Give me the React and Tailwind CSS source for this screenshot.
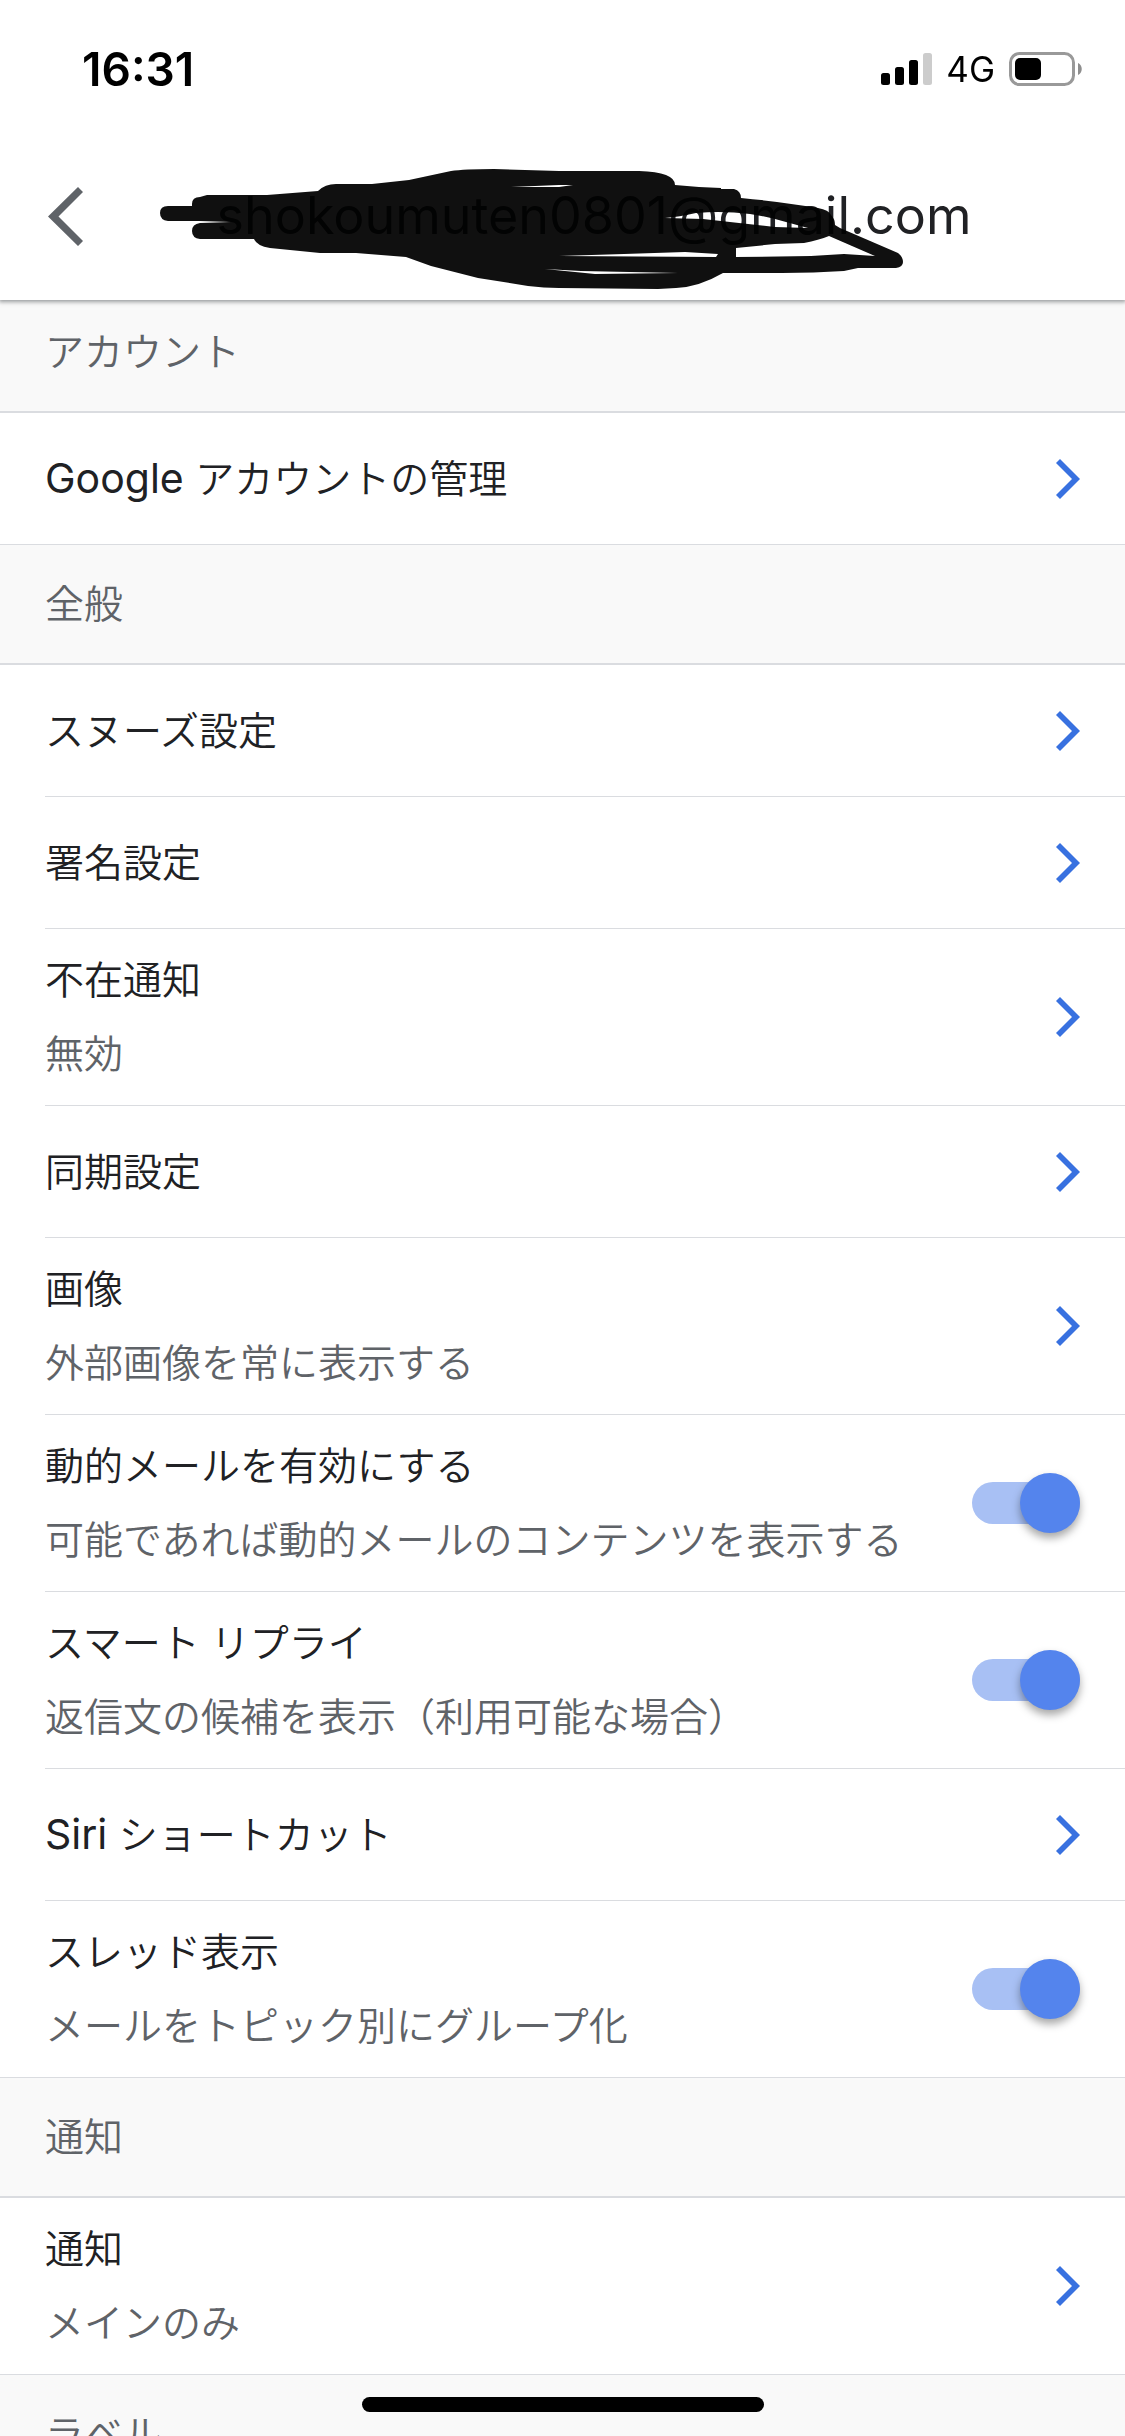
import { useState } from "react";

const sections = [
    {
        title: "アカウント",
        items: [{ latin: "Google ", label: "アカウントの管理" }],
    },
    {
        title: "全般",
        items: [
            { label: "スヌーズ設定" },
            { label: "署名設定" },
            { label: "不在通知", detail: "無効" },
            { label: "同期設定" },
            { label: "画像", detail: "外部画像を常に表示する" },
            { label: "動的メールを有効にする", detail: "可能であれば動的メールのコンテンツを表示する", toggle: true },
            { label: "スマート リプライ", detail: "返信文の候補を表示（利用可能な場合）", toggle: true },
            { latin: "Siri ", label: "ショートカット" },
            { label: "スレッド表示", detail: "メールをトピック別にグループ化", toggle: true },
        ],
    },
    {
        title: "通知",
        items: [{ label: "通知", detail: "メインのみ" }],
    },
    {
        title: "ラベル",
        items: [],
    },
];

function StatusBar() {
    return (
        <div className="flex h-[132px] shrink-0 items-center justify-between pt-1.5 pr-[42px] pl-[82px] text-black">
            <span className="text-[46px] leading-none font-semibold">16:31</span>
            <div className="flex items-center gap-3.5">
                <svg className="h-8 w-[51px]" viewBox="0 0 51 32" aria-hidden="true">
                    <rect x="0" y="20" width="9" height="12" rx="2.5" />
                    <rect x="14" y="14" width="9" height="18" rx="2.5" />
                    <rect x="28" y="7" width="9" height="25" rx="2.5" />
                    <rect x="42" y="0" width="9" height="32" rx="2.5" fill="#cccccc" />
                </svg>
                <span className="text-[35px] leading-none">4G</span>
                <svg className="h-[34px] w-[74px]" viewBox="0 0 74 34" aria-hidden="true">
                    <rect x="1.5" y="1.5" width="63" height="31" rx="9" fill="none" stroke="#999999" strokeWidth="3" />
                    <rect x="6" y="6" width="26" height="22" rx="5" />
                    <path d="M69 11c5 2 5 10 0 12z" fill="#8e8e8e" />
                </svg>
            </div>
        </div>
    );
}

function Scribble() {
    return (
        <svg
            className="absolute -top-[26px] -left-17 h-[140px] w-[760px] max-w-none mix-blend-multiply"
            viewBox="150 160 760 140"
            fill="#101010"
            fillRule="evenodd"
            aria-hidden="true"
        >
            <path
                d="M169 206H193V204Q193 197 201 197L208 195H268L319 191Q326 184 337 184L373 184L410 180L452 171Q465 169 495 169L560 171H640Q676 172 676 185L700 187L722 188V189H735Q742 191 742 198Q785 202 819 208Q830 210 832 215Q836 219 836 225L841 228L899 253Q904 257 904 262Q904 267 897 268H859L845 271Q815 273 783 273H724Q700 287 677 288L659 289L560 288Q545 288 529 286L479 278L432 266L407 257L357 253H321L271 248Q258 246 255 239H201Q193 238 193 231Q193 224 201 223L232 222L200 221H169Q161 220 161 213Q161 206 169 206Z
                M737 248L776 244L805 243Q820 240 830 236L876 256L845 254L812 256L737 257Z
                M666 218Q680 217 697 213Q709 212 719 212Q735 212 751 214Q765 216 776 219L809 228L776 227L740 223L704 219Z
                M560 256L625 254L686 252L719 254L717 257Z
                M546 269L582 271L679 273L596 274Z
                M512 187L560 185L574 185L560 187Z"
            />
        </svg>
    );
}

function Header() {
    return (
        <header className="relative z-10 shrink-0 bg-white shadow-[0_1px_4px_1px_rgba(60,64,67,0.5)]">
            <StatusBar />
            <div className="flex h-[168px] items-center pr-5 pl-12">
                <button type="button" aria-label="戻る" className="shrink-0">
                    <svg className="h-[59px] w-[35px]" viewBox="0 0 35 59" fill="#5f6368" aria-hidden="true">
                        <path d="M30 0L35 5L10.500 29.500L35 54L30 59L0 29.500Z" />
                    </svg>
                </button>
                <h1 className="flex-1 text-center text-[52px] leading-[60px] whitespace-nowrap text-[#202124]">
                    <span className="relative inline-block">
                        shokoumuten0801@gmail.com
                        <Scribble />
                    </span>
                </h1>
            </div>
        </header>
    );
}

function RowText({ item }) {
    return (
        <span className="flex flex-col gap-4 text-left leading-[58px]">
            <span className="text-[#202124]">
                {item.latin && <span className="text-[41px] font-normal">{item.latin}</span>}
                {item.label}
            </span>
            {item.detail && <span className="text-[#5f6368]">{item.detail}</span>}
        </span>
    );
}

function Row({ item }) {
    const [enabled, setEnabled] = useState(true);
    const height = item.detail ? "h-[176px]" : "h-[131px]";

    return (
        <li className="group border-[#dadce0] pl-[45px] last:border-b">
            <div className="border-b border-[#dadce0] group-last:border-b-0">
                {item.toggle ? (
                    <label className={`flex items-center justify-between pr-[45px] ${height}`}>
                        <RowText item={item} />
                        <input
                            type="checkbox"
                            role="switch"
                            checked={enabled}
                            onChange={() => setEnabled(!enabled)}
                            className="flex h-[42px] w-[108px] shrink-0 appearance-none items-center rounded-full bg-gray-300 before:size-[60px] before:shrink-0 before:rounded-full before:bg-white before:shadow-[0_5px_9px_rgba(0,0,0,0.35)] checked:bg-[#a8c0f4] checked:before:ml-auto checked:before:bg-[#5484ed]"
                        />
                    </label>
                ) : (
                    <button type="button" className={`flex w-full items-center justify-between pr-[45px] ${height}`}>
                        <RowText item={item} />
                        <svg className="h-10 w-6 shrink-0" viewBox="0 0 24 40" fill="#3871e0" aria-hidden="true">
                            <path d="M4 0L24 20L4 40L0 36L16 20L0 4Z" />
                        </svg>
                    </button>
                )}
            </div>
        </li>
    );
}

export default function App() {
    return (
        <div className="relative flex h-screen flex-col overflow-hidden bg-white font-['Inter','Noto_Sans_CJK_JP',sans-serif]" lang="ja">
            <Header />
            <main className="-mt-[7px] min-h-0 flex-1 overflow-y-auto text-[39px] font-[350] [scrollbar-width:none]">
                {sections.map((section) => (
                    <section key={section.title}>
                        <h2 className="flex h-[120px] items-center border-b-2 border-[#dadce0] bg-[#f9f9f9] pl-[45px] font-[350] text-[#5f6368]">
                            {section.title}
                        </h2>
                        <ul>
                            {section.items.map((item) => (
                                <Row key={item.label} item={item} />
                            ))}
                        </ul>
                    </section>
                ))}
            </main>
            <div className="absolute bottom-6 left-1/2 z-10 h-[15px] w-[402px] -translate-x-1/2 rounded-full bg-black" />
        </div>
    );
}
